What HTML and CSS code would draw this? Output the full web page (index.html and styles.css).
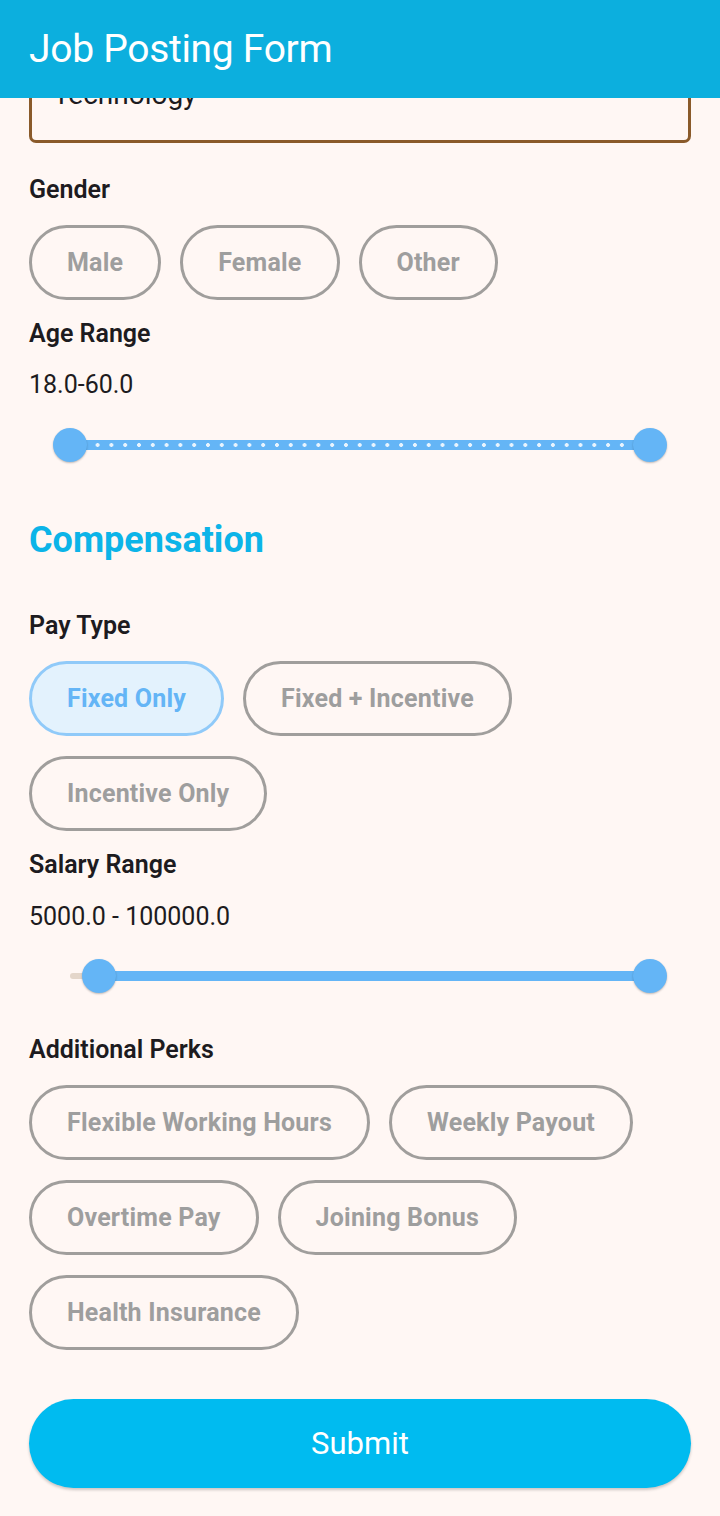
FILE: index.html
```html
<!DOCTYPE html>
<html>
<head>
<meta http-equiv="Content-Type" content="text/html; charset=utf-8"/>
<title>Job Posting Form</title>
<link rel="stylesheet" href="styles.css">
</head>
<body>

<header class="appbar">
  <h1 class="appbar-title">Job Posting Form</h1>
</header>

<main class="form">

  <div class="dropdown">
    <span class="dropdown-value">Technology</span>
    <svg class="dropdown-arrow" width="24" height="24" viewBox="0 0 24 24"><path d="M7 10l5 5 5-5z" fill="#49454F"/></svg>
  </div>

  <div class="label label-gender">Gender</div>
  <div class="chips">
    <span class="chip">Male</span>
    <span class="chip">Female</span>
    <span class="chip">Other</span>
  </div>

  <div class="label">Age Range</div>
  <div class="value">18.0-60.0</div>
  <div class="slider">
    <div class="track track-dotted"></div>
    <span class="thumb" style="left: 0%"></span>
    <span class="thumb" style="left: 100%"></span>
  </div>

  <h2 class="section">Compensation</h2>

  <div class="label label-pay">Pay Type</div>
  <div class="chips">
    <span class="chip chip-selected">Fixed Only</span>
    <span class="chip">Fixed + Incentive</span>
    <span class="chip">Incentive Only</span>
  </div>

  <div class="label">Salary Range</div>
  <div class="value value-salary">5000.0 - 100000.0</div>
  <div class="slider slider-salary">
    <div class="track track-inactive"></div>
    <div class="track track-active" style="left: 5%; width: 95%"></div>
    <span class="thumb" style="left: 5%"></span>
    <span class="thumb" style="left: 100%"></span>
  </div>

  <div class="label label-perks">Additional Perks</div>
  <div class="chips">
    <span class="chip">Flexible Working Hours</span>
    <span class="chip">Weekly Payout</span>
    <span class="chip">Overtime Pay</span>
    <span class="chip">Joining Bonus</span>
    <span class="chip">Health Insurance</span>
  </div>

  <button class="submit" type="button">Submit</button>

</main>

</body>
</html>
```

FILE: styles.css
```css
body {
  margin: 0;
  background-color: #fff7f4;
  font-family: Roboto, "Noto Sans", sans-serif;
  color: #1d1b20;
}

/* app bar stays on top, content scrolls under it */
.appbar {
  position: fixed;
  top: 0;
  left: 0;
  right: 0;
  height: 98px;
  background-color: #0cafde;
  z-index: 10;
  display: flex;
  align-items: center;
  padding: 0 29px;
}

.appbar-title {
  margin: 0;
  color: #ffffff;
  font-weight: 400;
  font-size: 39px;
  letter-spacing: -0.3px;
}

.form {
  padding: 45px 29px 28px 29px;
}

.dropdown {
  height: 92px;
  border: 3px solid #8a5a2a;
  border-radius: 7px;
  display: flex;
  align-items: center;
  padding: 0 28px 0 21px;
}

.dropdown-value {
  flex: 1;
  font-size: 28px;
}

.label {
  font-size: 25px;
  font-weight: 600;
  line-height: 30px;
  margin-top: 19px;
}

.label-gender {
  margin-top: 32px;
}

.label-pay {
  margin-top: 49px;
}

.label-perks {
  margin-top: 35px;
}

.value {
  font-size: 25px;
  line-height: 30px;
  margin-top: 21px;
}

.value-salary {
  margin-top: 22px;
}

.chips {
  display: flex;
  flex-wrap: wrap;
  gap: 20px 19px;
  margin-top: 20px;
}

.chip {
  border: 3px solid #a09e9c;
  border-radius: 40px;
  padding: 21px 35px 20px 35px;
  line-height: 28px;
  font-size: 25px;
  font-weight: 700;
  letter-spacing: 0.2px;
  color: #9e9e9e;
}

.chip-selected {
  background-color: #e3f2fd;
  border-color: #90caf9;
  color: #64b5f6;
}

/* range sliders */
.slider {
  position: relative;
  height: 48px;
  margin: 21px 41px 0 41px;
}

.slider-salary {
  margin-top: 20px;
}

.track {
  position: absolute;
  top: 19px;
  left: 0;
  right: 0;
  height: 10px;
  background-color: #64b5f6;
}

.track-dotted {
  background-image: radial-gradient(circle, rgba(255, 255, 255, 0.85) 1.7px, transparent 2.2px);
  background-size: 13.81px 10px;
  background-position: -6.9px 0;
}

.track-inactive {
  top: 21px;
  height: 6px;
  border-radius: 3px;
  background-color: #e4d6ca;
}

.track-active {
  right: auto;
}

.thumb {
  position: absolute;
  top: 7px;
  width: 34px;
  height: 34px;
  margin-left: -17px;
  border-radius: 50%;
  background-color: #64b5f6;
  box-shadow: 0 1px 2px rgba(0, 0, 0, 0.25);
}

.section {
  margin: 49px 0 0 0;
  font-size: 36px;
  line-height: 44px;
  font-weight: 700;
  color: #0cb4e8;
}

.submit {
  display: block;
  width: 100%;
  height: 89px;
  margin-top: 49px;
  border: none;
  border-radius: 45px;
  background-color: #00bbf0;
  color: #ffffff;
  font-family: Roboto, "Noto Sans", sans-serif;
  font-size: 31px;
  box-shadow: 0 2px 3px rgba(0, 0, 0, 0.2);
}
```
